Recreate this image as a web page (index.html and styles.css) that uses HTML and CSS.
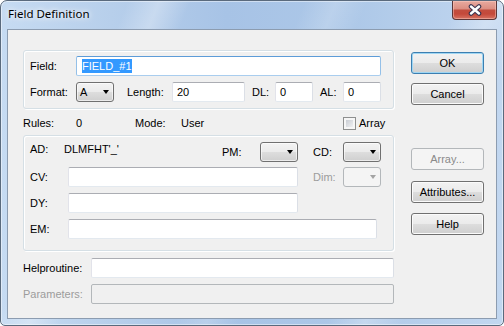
FILE: index.html
```html
<!DOCTYPE html>
<html>
<head>
<meta charset="utf-8">
<title>Field Definition</title>
<link rel="stylesheet" href="styles.css">
</head>
<body>
<div class="window">
  <div class="titlebar">
    <span class="title">Field Definition</span>
    <div class="close">
      <svg width="14" height="12" viewBox="0 0 14 12">
        <path d="M3 2.5 L11 9.5 M11 2.5 L3 9.5" stroke="#3b3550" stroke-width="4.6" stroke-linecap="round"/>
        <path d="M3 2.5 L11 9.5 M11 2.5 L3 9.5" stroke="#ffffff" stroke-width="2.4" stroke-linecap="round"/>
      </svg>
    </div>
  </div>
  <div class="client">
    <div class="form">
      <div class="group group-main">
        <div class="row">
          <span class="w46">Field:</span>
          <div class="input focus w305"><span class="sel">FIELD_#1</span></div>
        </div>
        <div class="row mt6">
          <span class="w46">Format:</span>
          <div class="combo w38"><span>A</span></div>
          <span class="w45 ml13">Length:</span>
          <div class="input w73">20</div>
          <span class="w23 ml7">DL:</span>
          <div class="input w38">0</div>
          <span class="w23 ml7">AL:</span>
          <div class="input w38">0</div>
        </div>
      </div>

      <div class="row rules">
        <span class="w53">Rules:</span>
        <span class="w59">0</span>
        <span class="w46">Mode:</span>
        <span class="w162">User</span>
        <span class="check"></span>
        <span class="check-label">Array</span>
      </div>

      <div class="group group-attr">
        <div class="row">
          <span class="w34 top">AD:</span>
          <span class="w158 top">DLMFHT'_'</span>
          <span class="w38">PM:</span>
          <div class="combo w38"><span></span></div>
          <span class="w30 ml15">CD:</span>
          <div class="combo w38"><span></span></div>
        </div>
        <div class="row mt5">
          <span class="w38">CV:</span>
          <div class="input w230"></div>
          <span class="w30 ml15 dim">Dim:</span>
          <div class="combo disabled w38"><span></span></div>
        </div>
        <div class="row mt6">
          <span class="w38">DY:</span>
          <div class="input w230"></div>
        </div>
        <div class="row mt6">
          <span class="w38">EM:</span>
          <div class="input w309"></div>
        </div>
      </div>

      <div class="row mt7">
        <span class="w68">Helproutine:</span>
        <div class="input w303"></div>
      </div>
      <div class="row mt6">
        <span class="w68 dim">Parameters:</span>
        <div class="input disabled w303"></div>
      </div>
    </div>

    <div class="actions">
      <button class="btn default">OK</button>
      <button class="btn mt9">Cancel</button>
      <button class="btn disabled mt43">Array...</button>
      <button class="btn mt11">Attributes...</button>
      <button class="btn mt10">Help</button>
    </div>
  </div>
</div>
</body>
</html>
```

FILE: styles.css
```css
html, body {
  margin: 0;
  padding: 0;
  background: #ffffff;
}

body {
  font-family: "Liberation Sans", Arial, sans-serif;
  font-size: 11px;
  line-height: 13px;
  color: #000;
}

.window {
  width: 504px;
  height: 326px;
  box-sizing: border-box;
  border: 1px solid #5a6a7d;
  border-radius: 7px 7px 5px 5px;
  overflow: hidden;
  display: flex;
  flex-direction: column;
  background:
    linear-gradient(112deg, rgba(255,255,255,0) 0%, rgba(255,255,255,0) 20%, rgba(255,255,255,.30) 25%, rgba(255,255,255,0) 30%, rgba(255,255,255,0) 48%, rgba(255,255,255,.18) 53%, rgba(255,255,255,0) 58%, rgba(255,255,255,0) 72%, rgba(255,255,255,.28) 78%, rgba(255,255,255,0) 84%),
    linear-gradient(90deg, #c6dbf2 0%, #b7cfeb 22%, #a7c3e6 45%, #adc8e8 70%, #c2d7f0 100%);
  box-shadow: inset 0 0 0 1px rgba(255,255,255,.45);
}

.titlebar {
  height: 28px;
  flex: none;
  box-sizing: border-box;
  padding: 0 6px 0 7px;
  display: flex;
  justify-content: space-between;
  align-items: flex-start;
}

.title {
  margin-top: 5px;
  font-family: "Noto Sans", "Open Sans", sans-serif;
  font-size: 11.5px;
  line-height: 16px;
  color: #000;
  text-shadow: 0 0 5px #fff, 0 0 9px rgba(255,255,255,.9);
}

.close {
  width: 45px;
  height: 19px;
  box-sizing: border-box;
  border: 1px solid #5b3638;
  border-top: none;
  border-radius: 0 0 4px 4px;
  background: linear-gradient(#e8aa9f 0%, #dc8f83 42%, #c24d3e 52%, #c4493a 72%, #d77262 100%);
  box-shadow: inset 0 0 0 1px rgba(255,210,200,.45);
  display: flex;
  align-items: center;
  justify-content: center;
}

.close svg {
  display: block;
}

.client {
  flex: 1;
  margin: 0 6px 6px 6px;
  border: 1px solid #8c9cb0;
  background: #f0f0f0;
  display: flex;
}

.form {
  padding: 20px 0 0 15px;
  width: 371px;
}

.group {
  box-sizing: border-box;
  width: 371px;
  border: 1px solid #d5dfe5;
  border-radius: 3px;
  box-shadow: inset 1px 1px 0 #fff, 1px 1px 0 #fff;
  padding-left: 6px;
}

.group-main {
  height: 59px;
  padding-top: 5px;
}

.group-attr {
  height: 116px;
  padding-top: 6px;
}

.row {
  display: flex;
  align-items: center;
  height: 20px;
}

.rules {
  height: 13px;
  margin: 8px 0 5px 0;
}

.top {
  align-self: flex-start;
  margin-top: 1px;
}

.dim {
  color: #9c9c9c;
}

.input {
  box-sizing: border-box;
  height: 20px;
  background: #fff;
  border: 1px solid;
  border-color: #abadb3 #dbdfe6 #e3e9ef #e2e3ea;
  border-radius: 2px;
  display: flex;
  align-items: center;
  padding-left: 4px;
}

.input.focus {
  border-color: #5d9cd8 #94c0e8 #a9cdee #94c0e8;
  padding-left: 5px;
}

.input.disabled {
  background: #f0f0f0;
  border-color: #b3b7ba;
}

.sel {
  background: #3399ff;
  color: #fff;
  line-height: 14px;
}

.combo {
  box-sizing: border-box;
  height: 20px;
  border: 1px solid #707070;
  border-radius: 3px;
  background: linear-gradient(#f3f3f3 0%, #ebebeb 48%, #dddddd 52%, #cfcfcf 100%);
  box-shadow: inset 0 0 0 1px rgba(255,255,255,.6);
  display: flex;
  align-items: center;
  justify-content: space-between;
  padding-left: 3px;
}

.combo::after {
  content: "";
  width: 0;
  height: 0;
  margin-right: 4px;
  border-left: 3.5px solid transparent;
  border-right: 3.5px solid transparent;
  border-top: 4px solid #000;
}

.combo.disabled {
  border-color: #b3b7ba;
  background: #f4f4f4;
  box-shadow: none;
}

.combo.disabled::after {
  border-top-color: #a3a3a3;
}

.check {
  box-sizing: border-box;
  width: 13px;
  height: 13px;
  border: 1px solid #8e8f8f;
  padding: 2px;
  background: linear-gradient(135deg, #c9cdd3, #eff0f2) content-box, #f6f6f6;
}

.check-label {
  margin-left: 3px;
}

.actions {
  margin-left: 17px;
  padding-top: 22px;
  display: flex;
  flex-direction: column;
}

.btn {
  box-sizing: border-box;
  width: 73px;
  height: 22px;
  margin-left: 0;
  margin-right: 0;
  padding: 0;
  border: 1px solid #707070;
  border-radius: 3px;
  background: linear-gradient(#f2f2f2 0%, #ebebeb 49%, #dddddd 51%, #cfcfcf 100%);
  box-shadow: inset 0 0 0 1px #fbfbfb;
  font-family: "Liberation Sans", Arial, sans-serif;
  font-size: 11px;
  line-height: 13px;
  color: #000;
  display: flex;
  align-items: center;
  justify-content: center;
}

.btn.default {
  border-color: #3c7fb1;
  box-shadow: inset 0 0 0 1px #9fd6f3;
}

.btn.disabled {
  border-color: #b3b7ba;
  background: #f4f4f4;
  box-shadow: none;
  color: #8a8a8a;
}

.w23 { width: 23px; flex: none; }
.w30 { width: 30px; flex: none; }
.w34 { width: 34px; flex: none; }
.w38 { width: 38px; flex: none; }
.w45 { width: 45px; flex: none; }
.w46 { width: 46px; flex: none; }
.w53 { width: 53px; flex: none; }
.w59 { width: 59px; flex: none; }
.w68 { width: 68px; flex: none; }
.w73 { width: 73px; flex: none; }
.w158 { width: 158px; flex: none; }
.w162 { width: 162px; flex: none; }
.w230 { width: 230px; flex: none; }
.w303 { width: 303px; flex: none; }
.w305 { width: 305px; flex: none; }
.w309 { width: 309px; flex: none; }

.ml7 { margin-left: 7px; }
.ml13 { margin-left: 13px; }
.ml15 { margin-left: 15px; }

.mt5 { margin-top: 5px; }
.mt6 { margin-top: 6px; }
.mt7 { margin-top: 7px; }
.mt9 { margin-top: 9px; }
.mt10 { margin-top: 10px; }
.mt11 { margin-top: 11px; }
.mt43 { margin-top: 43px; }
```
